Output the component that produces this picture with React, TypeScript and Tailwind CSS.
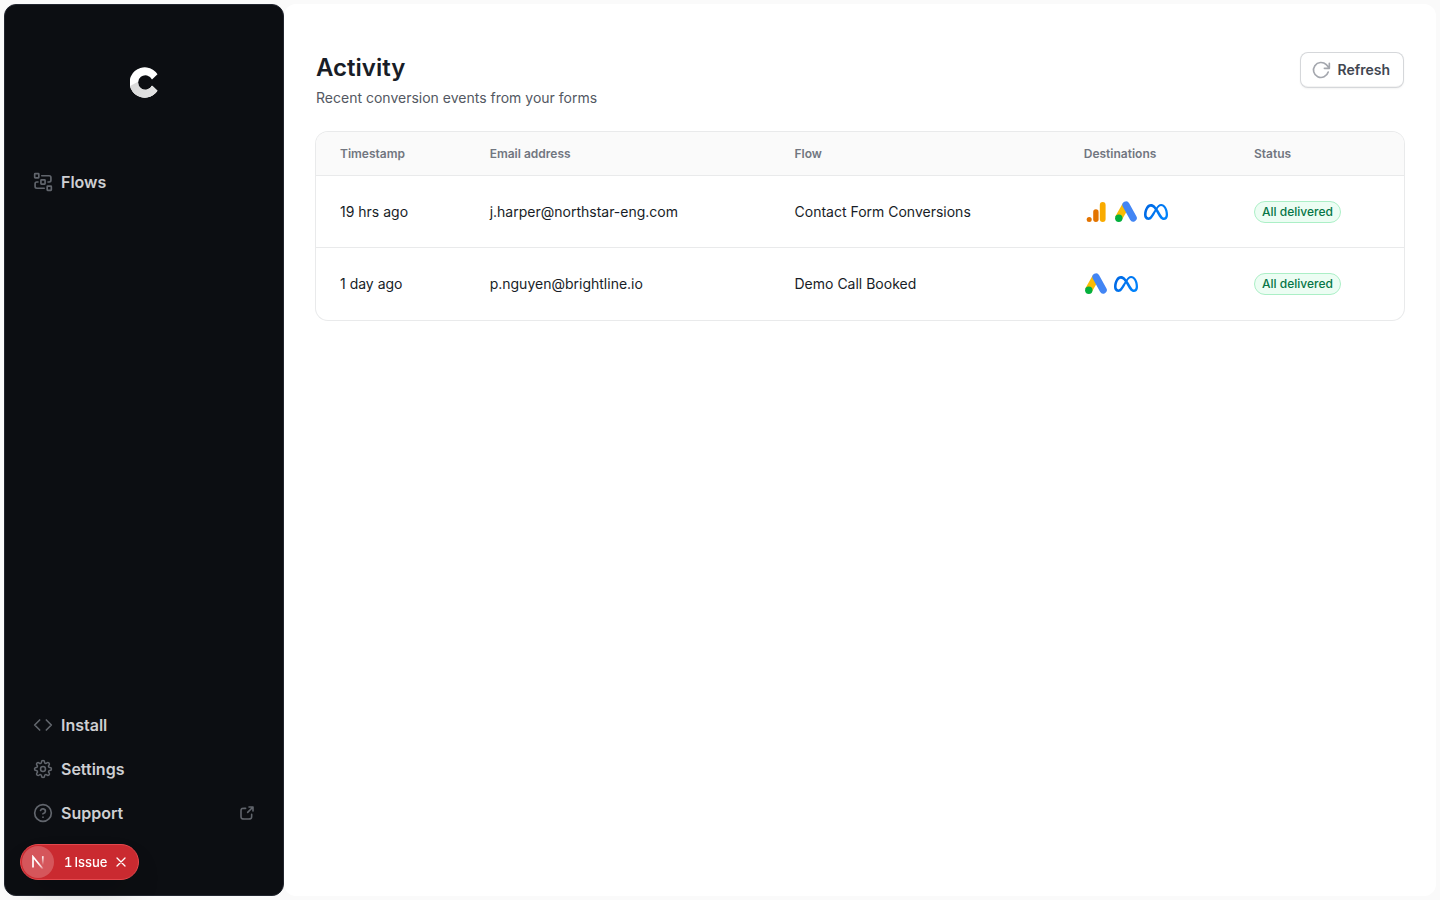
import type { ReactNode } from 'react'

const baseIcon = {
  viewBox: '0 0 24 24',
  fill: 'none',
  stroke: 'currentColor',
  strokeWidth: 2,
  strokeLinecap: 'round',
  strokeLinejoin: 'round',
  'aria-hidden': true,
} as const

function DataflowIcon({ className }: { className?: string }) {
  return (
    <svg {...baseIcon} className={className}>
      <rect x="2" y="2" width="5" height="5" rx="0.6" />
      <rect x="9.5" y="9.5" width="5" height="5" rx="0.6" />
      <rect x="17" y="17" width="5" height="5" rx="0.6" />
      <path d="M10.5 4.5H19.4C20.4 4.5 21.5 5.2 21.5 6.5V10C21.5 11.3 20.6 12 19.5 12H18" />
      <path d="M6 12H4.5C3.3 12 2.5 12.8 2.5 14V17.5C2.5 18.7 3.4 19.5 4.5 19.5H13.5" />
    </svg>
  )
}

function CodeIcon({ className }: { className?: string }) {
  return (
    <svg {...baseIcon} className={className}>
      <path d="M16 18L22 12L16 6M8 6L2 12L8 18" />
    </svg>
  )
}

function SettingsIcon({ className }: { className?: string }) {
  return (
    <svg {...baseIcon} viewBox="-1 -1 26 26" className={className}>
      <path d="M19.4 15a1.65 1.65 0 0 0 .33 1.82l.06.06a2 2 0 0 1 0 2.83 2 2 0 0 1-2.83 0l-.06-.06a1.65 1.65 0 0 0-1.82-.33 1.65 1.65 0 0 0-1 1.51V21a2 2 0 0 1-2 2 2 2 0 0 1-2-2v-.09A1.65 1.65 0 0 0 9 19.4a1.65 1.65 0 0 0-1.82.33l-.06.06a2 2 0 0 1-2.83 0 2 2 0 0 1 0-2.83l.06-.06a1.65 1.65 0 0 0 .33-1.82 1.65 1.65 0 0 0-1.51-1H3a2 2 0 0 1-2-2 2 2 0 0 1 2-2h.09A1.65 1.65 0 0 0 4.6 9a1.65 1.65 0 0 0-.33-1.82l-.06-.06a2 2 0 0 1 0-2.83 2 2 0 0 1 2.83 0l.06.06a1.65 1.65 0 0 0 1.82.33H9a1.65 1.65 0 0 0 1-1.51V3a2 2 0 0 1 2-2 2 2 0 0 1 2 2v.09a1.65 1.65 0 0 0 1 1.51 1.65 1.65 0 0 0 1.82-.33l.06-.06a2 2 0 0 1 2.83 0 2 2 0 0 1 0 2.83l-.06.06a1.65 1.65 0 0 0-.33 1.82V9a1.65 1.65 0 0 0 1.51 1H21a2 2 0 0 1 2 2 2 2 0 0 1-2 2h-.09a1.65 1.65 0 0 0-1.51 1z" />
      <circle cx="12" cy="12" r="3.2" />
    </svg>
  )
}

function HelpIcon({ className }: { className?: string }) {
  return (
    <svg {...baseIcon} className={className}>
      <path d="M9.09 9C9.575 7.622 10.966 6.797 12.407 7.044C13.848 7.291 14.9 8.538 14.9 10C14.9 12 11.91 13 11.91 13M12 17H12.01" />
      <circle cx="12" cy="12" r="10" />
    </svg>
  )
}

function ExternalIcon({ className }: { className?: string }) {
  return (
    <svg {...baseIcon} strokeWidth={2.4} className={className}>
      <path d="M21 9V3H15M21 3L13 11M10 5H7.8C6.12 5 5.28 5 4.638 5.327C4.074 5.615 3.615 6.074 3.327 6.638C3 7.28 3 8.12 3 9.8V16.2C3 17.88 3 18.72 3.327 19.362C3.615 19.926 4.074 20.385 4.638 20.673C5.28 21 6.12 21 7.8 21H14.2C15.88 21 16.72 21 17.362 20.673C17.926 20.385 18.385 19.926 18.673 19.362C19 18.72 19 17.88 19 16.2V14" />
    </svg>
  )
}

function RefreshIcon({ className }: { className?: string }) {
  return (
    <svg {...baseIcon} className={className}>
      <path d="M22 10S19.995 7.268 18.366 5.638A9 9 0 1 0 20.648 14.5M22 10V4M22 10H16" />
    </svg>
  )
}

function Logo() {
  return (
    <svg viewBox="0 0 28 31" className="h-[31px] w-7" role="img" aria-label="Home">
      <defs>
        <linearGradient id="logo-shade" x1="0" y1="0" x2="1" y2="1">
          <stop offset="0" stopColor="#d4d4d4" />
          <stop offset="1" stopColor="#e4e4e4" />
        </linearGradient>
        <clipPath id="logo-low">
          <path d="M0 19L8.5 14.5V19H28V31H0Z" />
        </clipPath>
      </defs>
      <path
        d="M27.5 7.2L22 12.4A7.3 7.3 0 1 0 22 18.6L27.5 23.8A15.2 15.2 0 1 1 27.5 7.2Z"
        fill="#ffffff"
      />
      <path
        d="M27.5 7.2L22 12.4A7.3 7.3 0 1 0 22 18.6L27.5 23.8A15.2 15.2 0 1 1 27.5 7.2Z"
        fill="url(#logo-shade)"
        clipPath="url(#logo-low)"
      />
    </svg>
  )
}

function AnalyticsLogo() {
  return (
    <svg viewBox="0 0 24 24" className="size-6" role="img" aria-label="Google Analytics">
      <rect x="15.8" y="2" width="5.8" height="20" rx="2.9" fill="#f9ab00" />
      <rect x="9.2" y="9.2" width="5.4" height="12.8" rx="2.7" fill="#e37400" />
      <circle cx="5.2" cy="19.4" r="2.5" fill="#e37400" />
    </svg>
  )
}

function AdsLogo() {
  return (
    <svg viewBox="0 0 24 24" className="size-6" role="img" aria-label="Google Ads">
      <path d="M8.6 3.6L15 7.5L7.6 20.2L1.3 16.4Z" fill="#fbbc04" />
      <path d="M12 5L19.2 18" stroke="#4285f4" strokeWidth="7.2" strokeLinecap="round" />
      <circle cx="4.8" cy="18.2" r="3.7" fill="#04b03d" />
    </svg>
  )
}

function MetaLogo() {
  return (
    <svg viewBox="0 0 24 24" className="size-6" role="img" aria-label="Meta">
      <defs>
        <linearGradient id="meta-blue" x1="0" y1="0" x2="1" y2="0.4">
          <stop offset="0" stopColor="#0064e0" />
          <stop offset="1" stopColor="#0082fb" />
        </linearGradient>
      </defs>
      <path
        fill="url(#meta-blue)"
        d="M6.915 4.03c-1.968 0-3.683 1.28-4.871 3.113C.704 9.208 0 11.883 0 14.449c0 .706.07 1.369.21 1.973a6.624 6.624 0 0 0 .265.86 5.297 5.297 0 0 0 .371.761c.696 1.159 1.818 1.927 3.593 1.927 1.497 0 2.633-.671 3.965-2.444.76-1.012 1.144-1.626 2.663-4.32l.756-1.339.186-.325c.061.1.121.196.183.3l2.152 3.595c.724 1.21 1.665 2.556 2.47 3.314 1.046.987 1.992 1.22 3.06 1.22 1.075 0 1.876-.355 2.455-.843a3.743 3.743 0 0 0 .81-.973c.542-.939.861-2.127.861-3.745 0-2.72-.681-5.357-2.084-7.45-1.282-1.912-2.957-2.93-4.716-2.93-1.047 0-2.088.467-3.053 1.308-.652.57-1.257 1.29-1.82 2.05-.69-.875-1.335-1.547-1.958-2.056-1.182-.966-2.315-1.303-3.454-1.303zm10.16 2.053c1.147 0 2.188.758 2.992 1.999 1.132 1.748 1.647 4.195 1.647 6.4 0 1.548-.368 2.9-1.839 2.9-.58 0-1.027-.23-1.664-1.004-.496-.601-1.343-1.878-2.832-4.358l-.617-1.028a44.908 44.908 0 0 0-1.255-1.98c.07-.109.141-.224.211-.327 1.12-1.667 2.118-2.602 3.358-2.602zm-10.201.553c1.265 0 2.058.791 2.675 1.446.307.327.737.871 1.234 1.579l-1.02 1.566c-.757 1.163-1.882 3.017-2.837 4.338-1.191 1.649-1.81 1.817-2.486 1.817-.524 0-1.038-.237-1.383-.794-.263-.426-.464-1.13-.464-2.046 0-2.221.63-4.535 1.66-6.088.454-.687.964-1.226 1.533-1.533a2.264 2.264 0 0 1 1.088-.285z"
      />
    </svg>
  )
}

const events = [
  {
    time: '19 hrs ago',
    email: 'j.harper@northstar-eng.com',
    flow: 'Contact Form Conversions',
    destinations: ['analytics', 'ads', 'meta'],
    status: 'All delivered',
  },
  {
    time: '1 day ago',
    email: 'p.nguyen@brightline.io',
    flow: 'Demo Call Booked',
    destinations: ['ads', 'meta'],
    status: 'All delivered',
  },
]

const destinationLogos: Record<string, () => ReactNode> = {
  analytics: AnalyticsLogo,
  ads: AdsLogo,
  meta: MetaLogo,
}

const footerItems = [
  { label: 'Install', href: '#install', icon: CodeIcon, external: false },
  { label: 'Settings', href: '#settings', icon: SettingsIcon, external: false },
  { label: 'Support', href: '#support', icon: HelpIcon, external: true },
]

function NavLink({ label, href, icon: Icon, external }: {
  label: string
  href: string
  icon: (props: { className?: string }) => ReactNode
  external?: boolean
}) {
  return (
    <a href={href} className="flex h-10 items-center rounded-md px-3 text-base font-semibold text-[#cecfd2]">
      <Icon className="mr-2 size-5 text-[#61656c]" />
      <span className="flex-1">{label}</span>
      {external && <ExternalIcon className="size-4 text-[#61656c]" />}
    </a>
  )
}

function Sidebar() {
  return (
    <aside className="flex w-[280px] shrink-0 flex-col rounded-xl border border-[#22262f] bg-[#0c0e12] px-4 pt-[62px] pb-[62px]">
      <a href="#home" className="flex justify-center">
        <Logo />
      </a>
      <nav className="mt-16 flex flex-1 flex-col justify-between">
        <ul>
          <li><NavLink label="Flows" href="#flows" icon={DataflowIcon} /></li>
        </ul>
        <ul className="space-y-1">
          {footerItems.map((item) => (
            <li key={item.label}><NavLink {...item} /></li>
          ))}
        </ul>
      </nav>
    </aside>
  )
}

function IssueBadge() {
  return (
    <div className="fixed bottom-5 left-5 flex h-9 items-center rounded-full border border-[#e5484d] bg-[#ca2a30] p-px pr-[11px] text-white shadow-[0_16px_32px_-8px_rgba(0,0,0,0.24)]">
      <button type="button" aria-label="Open dev tools" className="flex size-8 items-center justify-center rounded-full bg-[#d5565b]">
        <svg viewBox="0 0 14 14" className="size-3.5" fill="none" aria-hidden="true">
          <defs>
            <linearGradient id="n-diag" x1="8" y1="8" x2="12.5" y2="14" gradientUnits="userSpaceOnUse">
              <stop stopColor="#fff" />
              <stop offset="0.6" stopColor="#fff" stopOpacity="0.6" />
              <stop offset="1" stopColor="#fff" stopOpacity="0" />
            </linearGradient>
            <linearGradient id="n-stem" x1="12" y1="1" x2="12" y2="10" gradientUnits="userSpaceOnUse">
              <stop stopColor="#fff" />
              <stop offset="1" stopColor="#fff" stopOpacity="0" />
            </linearGradient>
          </defs>
          <path d="M2 12.5V1.8L12 14" stroke="url(#n-diag)" strokeWidth="1.7" />
          <path d="M11.8 1.2V10" stroke="url(#n-stem)" strokeWidth="1.7" />
        </svg>
      </button>
      <button type="button" className="ml-2.5 flex gap-0.5 text-[13px] leading-4 font-medium">
        <span className="tabular-nums">1</span>{' '}
        <span>Issue</span>
      </button>
      <button type="button" aria-label="Dismiss" className="ml-2">
        <svg viewBox="0 0 12 12" className="size-3" fill="none" stroke="currentColor" strokeWidth="1.3" strokeLinecap="round" aria-hidden="true">
          <path d="M2 2L10 10M10 2L2 10" />
        </svg>
      </button>
    </div>
  )
}

function ActivityTable() {
  return (
    <div className="mt-6 overflow-hidden rounded-xl bg-white ring-1 ring-[#e9eaeb]">
      <table className="w-full border-separate border-spacing-0 text-left text-sm text-[#181d27]">
        <thead className="bg-[#fafafa] text-xs text-[#717680]">
          <tr>
            {['Timestamp', 'Email address', 'Flow', 'Destinations', 'Status'].map((h) => (
              <th key={h} scope="col" className="h-11 border-b border-[#e9eaeb] px-6 font-semibold">{h}</th>
            ))}
          </tr>
        </thead>
        <tbody className="[&>tr:not(:last-child)>td]:border-b">
          {events.map((e) => (
            <tr key={e.email}>
              <td className="h-[72px] border-[#e9eaeb] px-6">{e.time}</td>
              <td className="border-[#e9eaeb] px-6">{e.email}</td>
              <td className="border-[#e9eaeb] px-6">{e.flow}</td>
              <td className="border-[#e9eaeb] px-6">
                <div className="flex gap-1.5">
                  {e.destinations.map((d) => {
                    const DestLogo = destinationLogos[d]
                    return <DestLogo key={d} />
                  })}
                </div>
              </td>
              <td className="border-[#e9eaeb] px-6">
                <span className="inline-flex rounded-full border border-[#abefc6] bg-[#ecfdf3] px-[7px] py-px text-xs leading-[18px] font-medium text-[#067647]">
                  {e.status}
                </span>
              </td>
            </tr>
          ))}
        </tbody>
      </table>
    </div>
  )
}

export default function App() {
  return (
    <div className="flex min-h-screen bg-[#fafafa] p-1 font-['Inter',sans-serif]">
      <Sidebar />
      <main className="min-w-0 flex-1 rounded-xl bg-white px-8 py-12">
        <header className="flex items-start justify-between">
          <div>
            <h1 className="text-2xl font-semibold text-[#181d27]">Activity</h1>
            <p className="mt-1 text-sm text-[#535862]">Recent conversion events from your forms</p>
          </div>
          <button type="button" className="flex h-9 items-center gap-[7px] rounded-lg bg-white pr-3.5 pl-[11px] text-sm font-semibold text-[#414651] shadow-[0_1px_2px_rgba(10,13,18,0.05),inset_0_0_0_1px_#d5d7da,inset_0_-2px_0_rgba(10,13,18,0.05)]">
            <RefreshIcon className="size-5 text-[#a4a7ae]" />
            Refresh
          </button>
        </header>
        <ActivityTable />
      </main>
      <IssueBadge />
    </div>
  )
}
